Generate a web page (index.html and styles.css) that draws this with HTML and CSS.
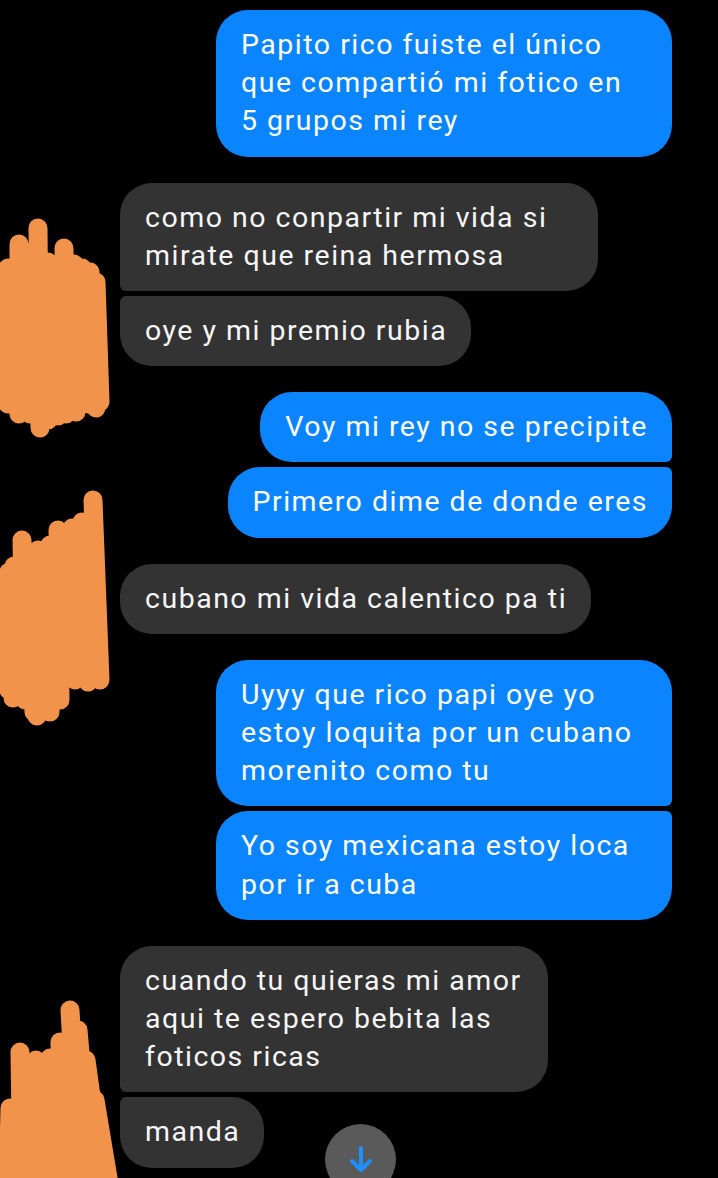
FILE: index.html
```html
<!DOCTYPE html>
<html lang="es">
<head>
<meta charset="utf-8">
<title>Chat</title>
<link rel="stylesheet" href="styles.css">
</head>
<body>
<div class="screen">
  <svg class="scribbles" width="130" height="1178" viewBox="0 0 130 1178" aria-hidden="true">
    <g class="ink">
      <path d="M8 268 L8 404 M19 244 L19 414 M29 252 L30 414 M38 228 L40 428 M48 262 L48 420 M57 266 L58 416 M64 248 L66 414 M74 264 L76 412 M82 268 L88 404 M90 272 L96 408 M96 282 L100 402"/>
      <path d="M93 500 L100 680 M82 522 L88 682 M72 528 L75 680 M58 530 L60 700 M50 545 L50 712 M38 550 L37 716 M32 560 L34 712 M22 540 L25 700 M14 566 L13 698 M9 572 L9 690"/>
      <path d="M70 1010 L80 1190 M78 1030 L92 1190 M86 1060 L104 1190 M95 1100 L110 1190 M60 1042 L62 1190 M50 1058 L50 1190 M36 1060 L38 1190 M20 1052 L22 1190 M10 1108 L8 1190 M28 1070 L28 1190"/>
    </g>
  </svg>

  <div class="chat">
    <div class="group out">
      <div class="bubble w456">Papito rico fuiste el único<br>que compartió mi fotico en<br>5 grupos mi rey</div>
    </div>

    <div class="group in">
      <div class="bubble first w478">como no conpartir mi vida si<br>mirate que reina hermosa</div>
      <div class="bubble last">oye y mi premio rubia</div>
    </div>

    <div class="group out">
      <div class="bubble first">Voy mi rey no se precipite</div>
      <div class="bubble last">Primero dime de donde eres</div>
    </div>

    <div class="group in">
      <div class="bubble">cubano mi vida calentico pa ti</div>
    </div>

    <div class="group out">
      <div class="bubble first w456">Uyyy que rico papi oye yo<br>estoy loquita por un cubano<br>morenito como tu</div>
      <div class="bubble last w456">Yo soy mexicana estoy loca<br>por ir a cuba</div>
    </div>

    <div class="group in">
      <div class="bubble first w428">cuando tu quieras mi amor<br>aqui te espero bebita las<br>foticos ricas</div>
      <div class="bubble last">manda</div>
    </div>
  </div>

  <button class="scroll-down" type="button" aria-label="Bajar">
    <svg width="30" height="30" viewBox="0 0 30 30" aria-hidden="true">
      <path d="M15 4 L15 25 M6 17 L15 26 L24 17" fill="none" stroke="#1f8fff" stroke-width="4" stroke-linecap="round" stroke-linejoin="round"/>
    </svg>
  </button>
</div>
</body>
</html>
```

FILE: styles.css
```css
html, body {
  margin: 0;
  padding: 0;
  background: #000;
}

body {
  width: 718px;
  height: 1178px;
  overflow: hidden;
  font-family: Roboto, "Noto Sans", "Liberation Sans", sans-serif;
}

.screen {
  position: relative;
  width: 718px;
  height: 1178px;
  overflow: hidden;
  background: #000;
}

.scribbles {
  position: absolute;
  left: 0;
  top: 0;
}

.ink path {
  fill: none;
  stroke: #f2934c;
  stroke-width: 19;
  stroke-linecap: round;
  stroke-linejoin: round;
}

.chat {
  display: flex;
  flex-direction: column;
  gap: 26px;
  padding: 10px 46px 0 120px;
}

.group {
  display: flex;
  flex-direction: column;
  gap: 5px;
}

.group.out {
  align-items: flex-end;
}

.group.in {
  align-items: flex-start;
}

.bubble {
  box-sizing: border-box;
  padding: 16px 24px 16px 25px;
  font-size: 28.5px;
  line-height: 38.2px;
  letter-spacing: 1.5px;
  color: #fff;
  border-radius: 32px;
  white-space: nowrap;
}

.out .bubble {
  background: #0a84ff;
}

.in .bubble {
  background: #333333;
  color: #f6f6f6;
}

.out .bubble.first { border-bottom-right-radius: 6px; }
.out .bubble.last { border-top-right-radius: 6px; }
.in .bubble.first { border-bottom-left-radius: 6px; }
.in .bubble.last { border-top-left-radius: 6px; }

.w456 { width: 456px; }
.w478 { width: 478px; }
.w428 { width: 428px; }

.scroll-down {
  position: absolute;
  left: 325px;
  top: 1124px;
  width: 71px;
  height: 71px;
  border: 0;
  border-radius: 50%;
  background: #5a5a5a;
  display: flex;
  align-items: flex-start;
  justify-content: center;
  padding: 20px 0 0;
  box-sizing: border-box;
}
```
